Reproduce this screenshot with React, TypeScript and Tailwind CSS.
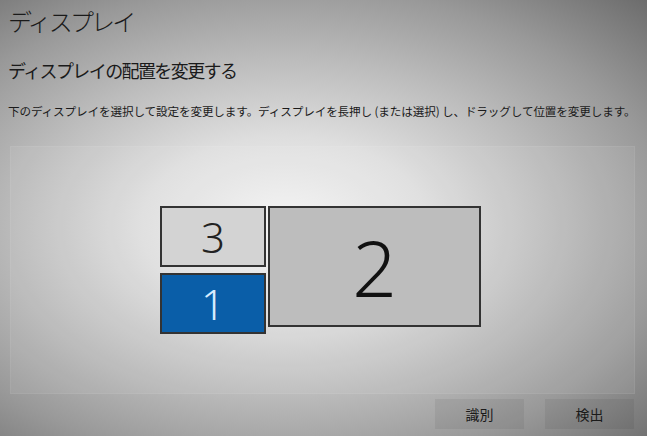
import React from "react";

const jp = "font-['Noto_Sans_CJK_JP','Noto_Sans',sans-serif]";

const Monitor = ({
  label,
  className,
  textClass,
}: {
  label: string;
  className: string;
  textClass: string;
}) => (
  <div className={`flex items-center justify-center border-2 border-[#333333] ${className}`}>
    <span className={`font-['Noto_Sans',sans-serif] font-light leading-none ${textClass}`}>{label}</span>
  </div>
);

const App = () => {
  return (
    <div
      className={`w-[647px] h-[436px] overflow-hidden flex flex-col text-[#1a1a1a] ${jp} bg-[radial-gradient(ellipse_farthest-corner_at_44%_52%,#f4f4f4_0%,#dedede_28%,#bcbcbc_52%,#999999_75%,#6c6c6c_100%)]`}
    >
      <h1 className="px-2 pt-[4px] text-[24px] font-light leading-[34px] tracking-[-2.8px]">ディスプレイ</h1>
      <h2 className="px-2 mt-[18px] text-[18px] font-normal leading-[28px] tracking-[-1.6px]">ディスプレイの配置を変更する</h2>
      <p className="px-2 mt-[18px] text-[11.6px] leading-[18px] tracking-[-0.12px] whitespace-nowrap">
        下のディスプレイを選択して設定を変更します。ディスプレイを長押し (または選択) し、ドラッグして位置を変更します。
      </p>
      <div className="mx-[10px] mt-[26px] h-[248px] w-[625px] border border-[#ffffff10] bg-[#ffffff12] flex items-center justify-center">
        <div className="flex gap-[2px] pr-[4px]">
          <div className="flex flex-col gap-[6px]">
            <Monitor label="3" className="w-[106px] h-[61px] bg-[#d3d3d3]" textClass="text-[42px] text-[#222]" />
            <Monitor label="1" className="w-[106px] h-[61px] bg-[#0a5ea8]" textClass="text-[42px] text-[#d7ecff]" />
          </div>
          <Monitor label="2" className="w-[213px] h-[121px] bg-[#bdbdbd]" textClass="text-[78px] text-[#111]" />
        </div>
      </div>
      <div className="flex justify-end gap-[21px] pr-[13px] mt-[5px]">
        <button className="w-[89px] h-[30px] bg-[#0000000f] text-[14px] text-[#1a1a1a]">識別</button>
        <button className="w-[89px] h-[30px] bg-[#0000000f] text-[14px] text-[#1a1a1a]">検出</button>
      </div>
    </div>
  );
};

export default App;
